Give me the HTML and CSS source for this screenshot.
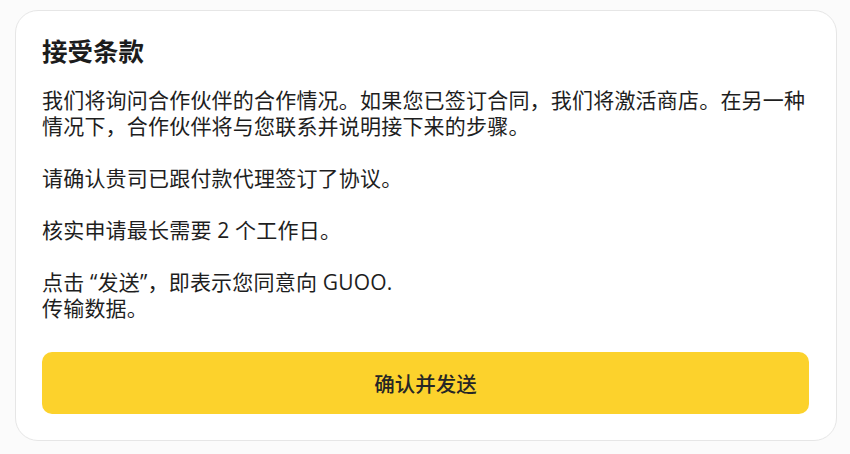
FILE: index.html
```html
<!DOCTYPE html>
<html lang="zh-CN">
<head>
<meta charset="utf-8">
<title>接受条款</title>
<link rel="stylesheet" href="styles.css">
</head>
<body>
<div class="card">
  <h1 class="title">接受条款</h1>
  <div class="body">
    <p>我们将询问合作伙伴的合作情况。如果您已签订合同，我们将激活商店。在另一种情况下，合作伙伴将与您联系并说明接下来的步骤。</p>
    <p>请确认贵司已跟付款代理签订了协议。</p>
    <p>核实申请最长需要 2 个工作日。</p>
    <p>点击 “发送”，即表示您同意向 GUOO.<br>传输数据。</p>
  </div>
  <button class="btn" type="button">确认并发送</button>
</div>
</body>
</html>
```

FILE: styles.css
```css
html, body {
  margin: 0;
  padding: 0;
  background: #fbfbfb;
}
body {
  padding: 10px 0 0 15px;
  font-family: "Noto Sans CJK SC", "Noto Sans", sans-serif;
  color: #222;
}
.card {
  box-sizing: border-box;
  width: 822px;
  height: 431px;
  background: #fff;
  border: 1px solid #e6e6e6;
  border-radius: 23px;
  padding: 23px 27px 26px 26px;
  display: flex;
  flex-direction: column;
}
.title {
  margin: 0;
  font-size: 25.5px;
  line-height: 32px;
  font-weight: 700;
  color: #1c1c1c;
}
.body {
  margin-top: 21px;
  font-family: "Open Sans", "Noto Sans CJK SC", sans-serif;
  font-size: 21px;
  letter-spacing: 0.2px;
  line-height: 26px;
  color: #1e1e1e;
}
.body p {
  margin: 0 0 26px 0;
}
.body p:last-child {
  margin-bottom: 0;
}
.btn {
  margin-top: auto;
  height: 62px;
  width: 100%;
  border: none;
  border-radius: 10px;
  background: #fcd22c;
  font-family: "Noto Sans CJK SC", "Noto Sans", sans-serif;
  font-size: 20.5px;
  font-weight: 500;
  color: #262626;
}
```
